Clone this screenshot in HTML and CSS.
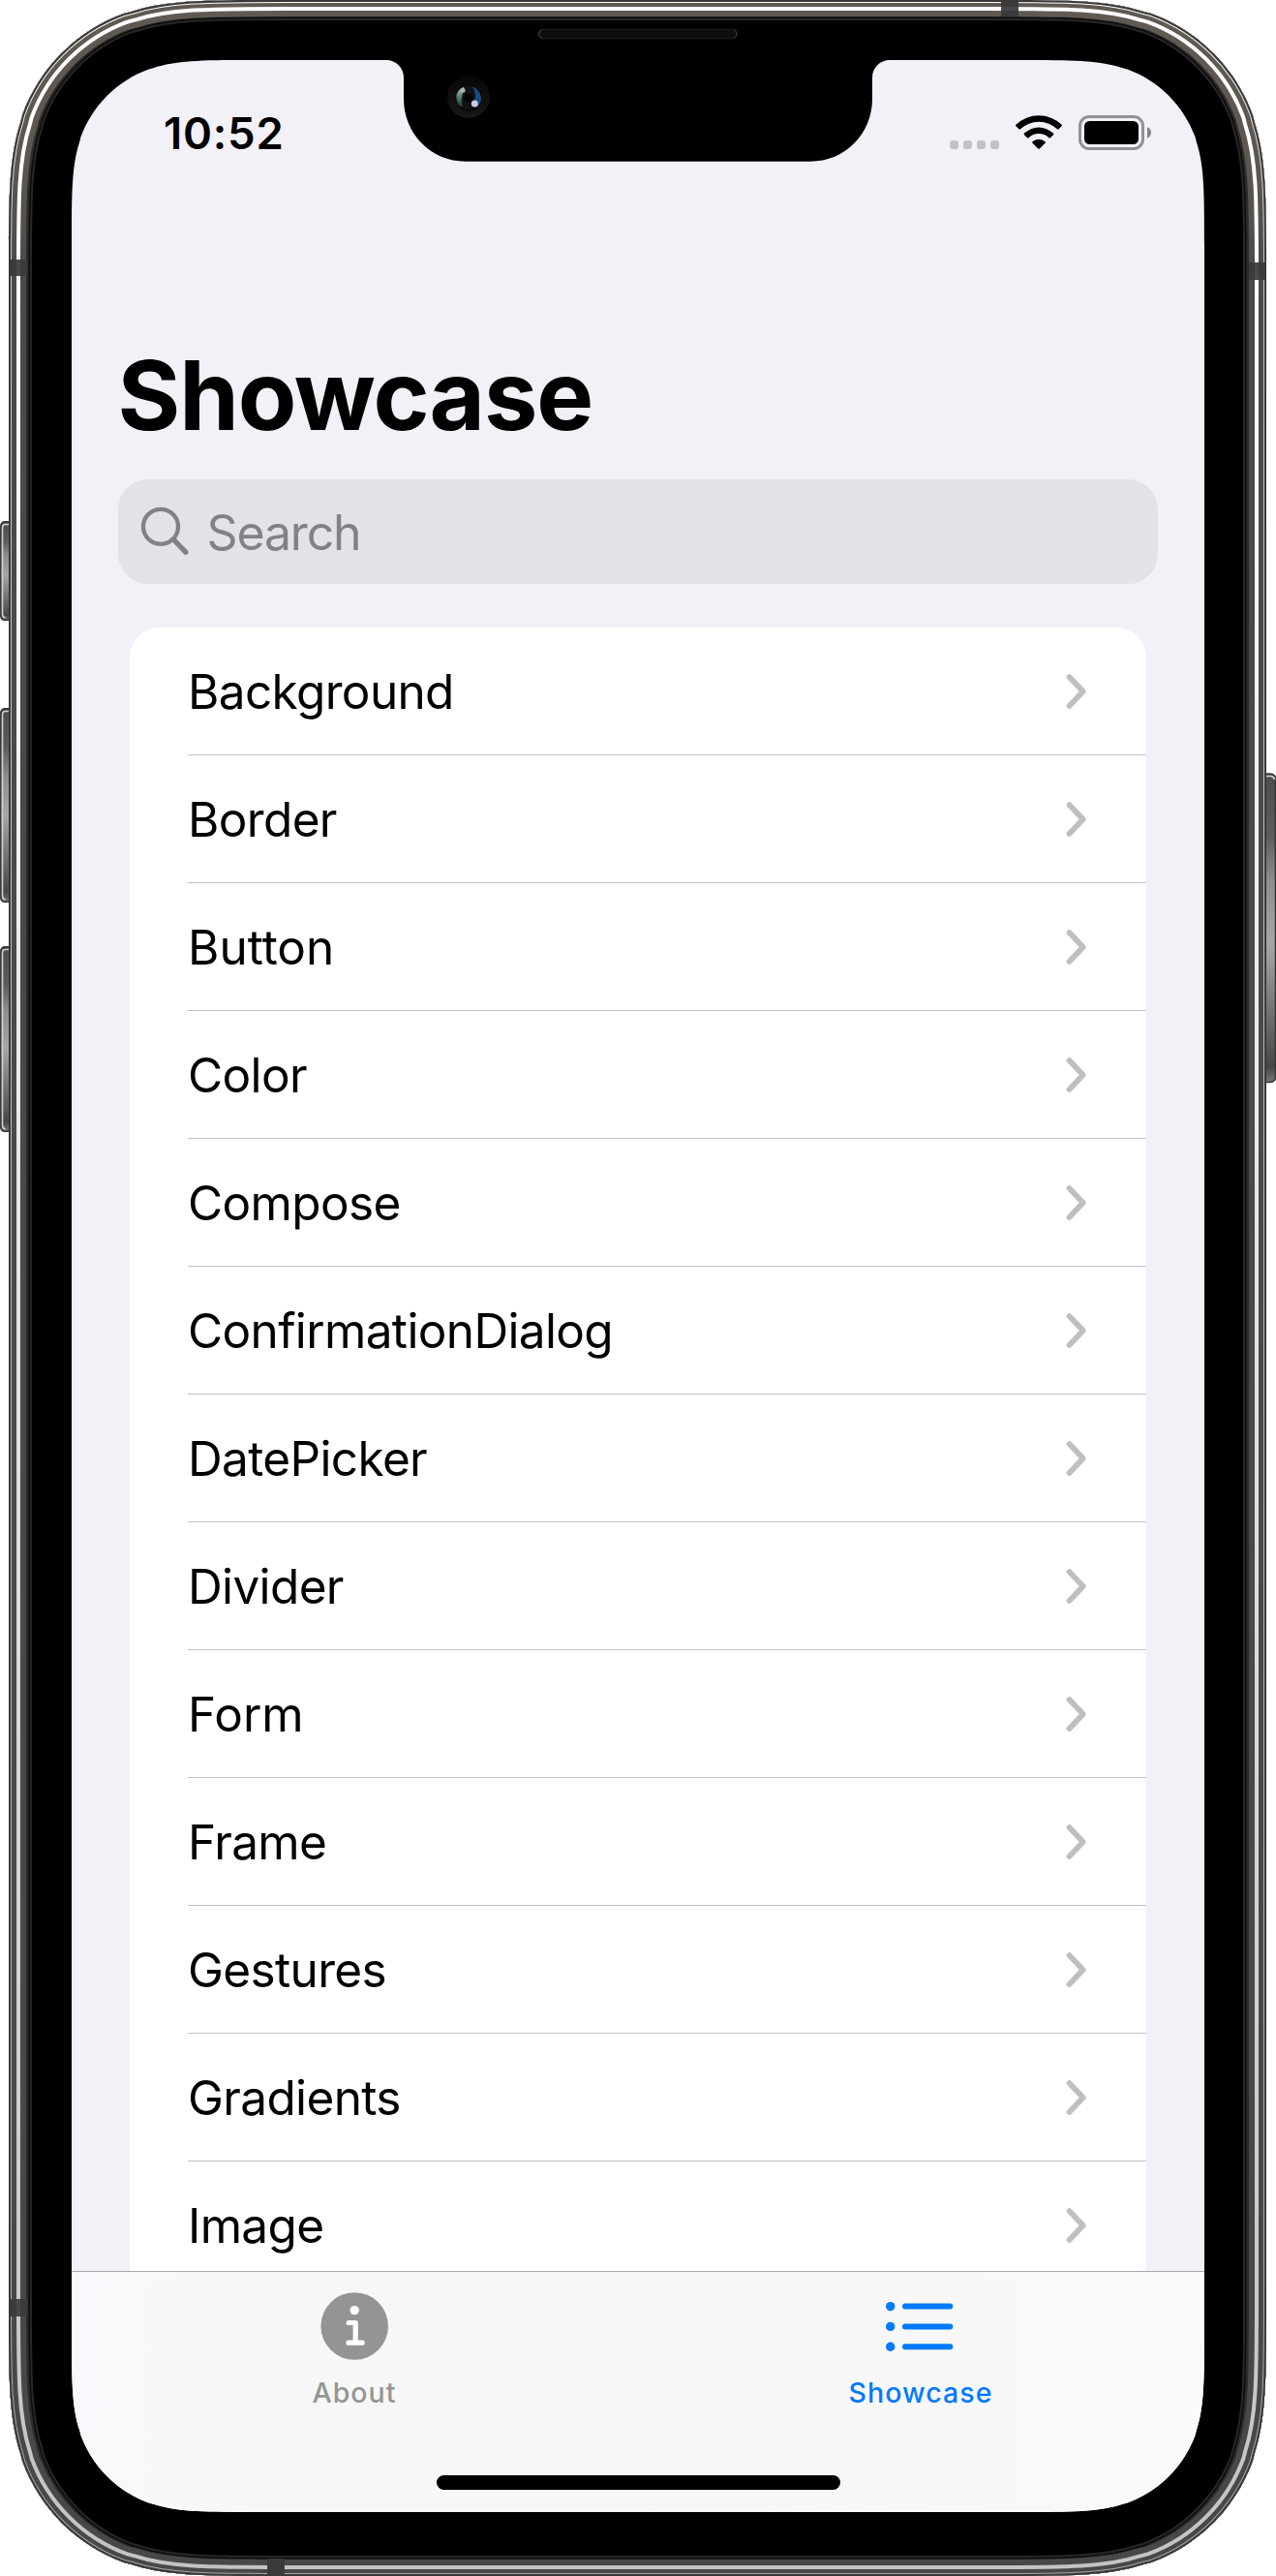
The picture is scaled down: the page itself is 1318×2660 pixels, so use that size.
FILE: index.html
```html
<!DOCTYPE html>
<html lang="en">
<head>
<meta charset="utf-8">
<title>Showcase</title>
<link rel="stylesheet" href="styles.css">
</head>
<body>
<div class="phone">
  <svg class="frame" width="1318" height="2660" viewBox="0 0 1318 2660" aria-hidden="true">
    <defs>
      <path id="body" d="M0,287.4c0,-82.8 0,-124.1 12.3,-161.5l1.8,-7.2c17.7,-48.6 56,-86.9 104.6,-104.6l7.2,-1.8c37.4,-12.3 78.7,-12.3 161.5,-12.3H1011.6c82.8,0 124.1,0 161.5,12.3l7.2,1.8c48.6,17.7 86.9,56 104.6,104.6l1.8,7.2c12.3,37.4 12.3,78.7 12.3,161.5V2372.6c0,82.8 0,124.1 -12.3,161.5l-1.8,7.2c-17.7,48.6 -56,86.9 -104.6,104.6l-7.2,1.8c-37.4,12.3 -78.7,12.3 -161.5,12.3H287.4c-82.8,0 -124.1,0 -161.5,-12.3l-7.2,-1.8c-48.6,-17.7 -86.9,-56 -104.6,-104.6l-1.8,-7.2c-12.3,-37.4 -12.3,-78.7 -12.3,-161.5z"/>
      <clipPath id="bodyClip"><use href="#body"/></clipPath>
      <linearGradient id="steel" gradientUnits="userSpaceOnUse" x1="0" y1="0" x2="0" y2="2660">
        <stop offset="0" stop-color="#605a53"/><stop offset=".06" stop-color="#5d5751"/><stop offset=".11" stop-color="#4a4a4a"/><stop offset="1" stop-color="#484848"/>
      </linearGradient>
      <linearGradient id="shine" gradientUnits="userSpaceOnUse" x1="0" y1="0" x2="0" y2="2660">
        <stop offset="0" stop-color="#fff"/><stop offset=".1" stop-color="#fdfdfd"/><stop offset=".45" stop-color="#e8e8e8"/><stop offset="1" stop-color="#c3c3c3"/>
      </linearGradient>
      <linearGradient id="rim" gradientUnits="userSpaceOnUse" x1="0" y1="0" x2="0" y2="2660">
        <stop offset="0" stop-color="#fff"/><stop offset=".1" stop-color="#c9c9c9"/><stop offset="1" stop-color="#a8a8a8"/>
      </linearGradient>
      <linearGradient id="key" x1="0" y1="0" x2="0" y2="1">
        <stop offset="0" stop-color="#4c4c4c"/><stop offset=".2" stop-color="#5c5c5c"/><stop offset=".35" stop-color="#8e8e8e"/><stop offset=".55" stop-color="#a6a6a6"/><stop offset=".75" stop-color="#777"/><stop offset=".95" stop-color="#464646"/><stop offset="1" stop-color="#777"/>
      </linearGradient>
      <linearGradient id="lensGreen" x1="0" y1="0" x2="0" y2="1"><stop offset="0" stop-color="#cfe0d8"/><stop offset=".5" stop-color="#5d9078"/><stop offset="1" stop-color="#20362c"/></linearGradient>
      <linearGradient id="lensRing" x1="0" y1="0" x2="0" y2="1"><stop offset="0" stop-color="#060606"/><stop offset="1" stop-color="#181818"/></linearGradient>
    </defs>

    <!-- side keys -->
    <g stroke="#333" stroke-width="1.5">
      <rect x=".8" y="538.800" width="16" height="101.500" rx="4" fill="url(#key)"/>
      <rect x=".8" y="731.800" width="16" height="199.500" rx="4" fill="url(#key)"/>
      <rect x=".8" y="977.800" width="16" height="190.500" rx="4" fill="url(#key)"/>
      <rect x="1300" y="799" width="17.500" height="318.500" rx="5" fill="url(#key)"/>
    </g>
    <g fill="none" stroke="#cfcfcf" stroke-width="1.600">
      <path d="M9,541.500H5.500Q2.500,541.500 2.500,545V634Q2.500,637 5.500,638"/>
      <path d="M9,734.500H5.500Q2.500,734.500 2.500,738V925Q2.500,928 5.500,929"/>
      <path d="M9,980.500H5.500Q2.500,980.500 2.500,984V1162Q2.500,1165 5.500,1166"/>
      <path d="M1308,801.500H1313Q1316,802 1316.500,805"/>
    </g>

    <!-- metal band: concentric inset strokes, widest first -->
    <g transform="translate(9,0)" clip-path="url(#bodyClip)">
      <use href="#body" fill="#000"/>
      <g fill="none" transform="translate(3,0) scale(.99538,1)">
        <use href="#body" stroke="#272727" stroke-width="42"/>
        <use href="#body" stroke="#0d0d0d" stroke-width="38"/>
        <use href="#body" stroke="#2c2b29" stroke-width="35"/>
      </g>
      <g fill="none" transform="translate(1,0) scale(.99846,1)">
        <use href="#body" stroke="url(#steel)" stroke-width="34"/>
        <use href="#body" stroke="url(#shine)" stroke-width="22"/>
        <use href="#body" stroke="url(#steel)" stroke-width="14"/>
      </g>
      <g fill="none">
        <use href="#body" stroke="url(#rim)" stroke-width="6"/>
        <use href="#body" stroke="#393939" stroke-width="4"/>
      </g>
    </g>

    <!-- antenna bands -->
    <g fill="#3b3b3b">
      <rect x="11" y="268" width="17" height="17"/>
      <rect x="11" y="2374" width="17" height="18"/>
      <rect x="1290" y="271" width="16" height="18"/>
      <rect x="1034" y="2" width="18" height="15"/>
      <rect x="276" y="2642" width="18" height="16"/>
    </g>
    <g fill="#484848">
      <rect x="17" y="268" width="4" height="17"/><rect x="17" y="2374" width="4" height="18"/>
      <rect x="1296" y="271" width="4" height="18"/><rect x="1034" y="7" width="18" height="4"/>
    </g>
  </svg>

  <main class="screen">
    <header class="status">
      <span class="time">10:52</span>
      <svg class="indicators" width="210" height="38" viewBox="0 0 210 38" aria-hidden="true">
        <g fill="#c3c2c7"><rect x="1" y="28" width="9" height="9" rx="3"/><rect x="15" y="28" width="9" height="9" rx="3"/><rect x="29" y="28" width="9" height="9" rx="3"/><rect x="43" y="28" width="9" height="9" rx="3"/></g>
        <g>
          <path d="M69.400,11.800A34,34 0 0 1 116.600,11.800Q117.400,12.500 116.600,13.300L113.600,16.300Q112.800,17 112,16.300A27.600,27.600 0 0 0 74,16.300Q73.200,17 72.400,16.300L69.400,13.300Q68.600,12.500 69.400,11.800Z"/>
          <path d="M78,20.600A21.700,21.700 0 0 1 108,20.600Q108.800,21.400 108,22.200L105,25.200Q104.200,25.900 103.400,25.200A15.200,15.200 0 0 0 82.600,25.200Q81.800,25.900 81,25.200L78,22.200Q77.200,21.400 78,20.600Z"/>
          <path d="M86.500,29.200A9.500,9.500 0 0 1 99.500,29.200Q100.200,30 99.500,30.700L93.800,36.400Q93,37.200 92.200,36.400L86.500,30.700Q85.800,30 86.500,29.200Z"/>
        </g>
        <rect x="135.500" y="3.500" width="65" height="33" rx="9.500" fill="none" stroke="#929196" stroke-width="3"/>
        <rect x="140" y="8" width="56" height="24" rx="5.500"/>
        <path d="M205,14.200Q209,16 209,20Q209,24 205,25.800Z" fill="#858489"/>
      </svg>
    </header>

    <h1 class="title">Showcase</h1>

    <label class="search">
      <svg width="52" height="54" viewBox="0 0 52 54" fill="none" stroke="#828187" aria-hidden="true">
        <circle cx="22" cy="22.800" r="18" stroke-width="4.300"/>
        <path d="M35.200,36L47.800,49.200" stroke-width="5.400" stroke-linecap="round"/>
      </svg>
      <span class="hint">Search</span>
    </label>

    <div class="scroll">
      <ul class="list">
        <li class="row"><span>Background</span><svg class="chev" viewBox="0 0 24 40"><path d="M4.500,5L18.700,20L4.500,35"/></svg></li>
        <li class="row"><span>Border</span><svg class="chev" viewBox="0 0 24 40"><path d="M4.500,5L18.700,20L4.500,35"/></svg></li>
        <li class="row loose"><span>Button</span><svg class="chev" viewBox="0 0 24 40"><path d="M4.500,5L18.700,20L4.500,35"/></svg></li>
        <li class="row"><span>Color</span><svg class="chev" viewBox="0 0 24 40"><path d="M4.500,5L18.700,20L4.500,35"/></svg></li>
        <li class="row"><span>Compose</span><svg class="chev" viewBox="0 0 24 40"><path d="M4.500,5L18.700,20L4.500,35"/></svg></li>
        <li class="row"><span>ConfirmationDialog</span><svg class="chev" viewBox="0 0 24 40"><path d="M4.500,5L18.700,20L4.500,35"/></svg></li>
        <li class="row"><span>DatePicker</span><svg class="chev" viewBox="0 0 24 40"><path d="M4.500,5L18.700,20L4.500,35"/></svg></li>
        <li class="row"><span>Divider</span><svg class="chev" viewBox="0 0 24 40"><path d="M4.500,5L18.700,20L4.500,35"/></svg></li>
        <li class="row loose"><span>Form</span><svg class="chev" viewBox="0 0 24 40"><path d="M4.500,5L18.700,20L4.500,35"/></svg></li>
        <li class="row"><span>Frame</span><svg class="chev" viewBox="0 0 24 40"><path d="M4.500,5L18.700,20L4.500,35"/></svg></li>
        <li class="row"><span>Gestures</span><svg class="chev" viewBox="0 0 24 40"><path d="M4.500,5L18.700,20L4.500,35"/></svg></li>
        <li class="row"><span>Gradients</span><svg class="chev" viewBox="0 0 24 40"><path d="M4.500,5L18.700,20L4.500,35"/></svg></li>
        <li class="row"><span>Image</span><svg class="chev" viewBox="0 0 24 40"><path d="M4.500,5L18.700,20L4.500,35"/></svg></li>
      </ul>
    </div>

    <nav class="tabs">
      <div class="tab">
        <svg width="72" height="72" viewBox="0 0 72 72" aria-hidden="true">
          <circle cx="35.200" cy="36" r="34.800" fill="#949593"/>
          <circle cx="35.200" cy="19.600" r="4.700" fill="#fff"/>
          <path d="M29.200,32.500H36.200V53M29,53.200H43.200" fill="none" stroke="#fff" stroke-width="5.200" stroke-linecap="round" stroke-linejoin="round"/>
        </svg>
        <span class="label about">About</span>
      </div>
      <div class="tab active">
        <svg width="72" height="72" viewBox="0 0 72 72" aria-hidden="true">
          <g fill="#007aff"><circle cx="4.700" cy="15.600" r="4.700"/><circle cx="4.700" cy="36.400" r="4.700"/><circle cx="4.700" cy="57.200" r="4.700"/></g>
          <path d="M20,15.600H66.300M20,36.400H66.300M20,57.200H66.300" stroke="#007aff" stroke-width="6" stroke-linecap="round"/>
        </svg>
        <span class="label">Showcase</span>
      </div>
      <div class="home"></div>
    </nav>
  </main>

  <svg class="notch" width="1318" height="180" viewBox="0 0 1318 180" aria-hidden="true">
    <path d="M399,62C409,62 417,70 417,80V102C417,138 445,166.700 481,166.700H837C873,166.700 901,138 901,102V80C901,70 909,62 919,62V60H399Z"/>
    <rect x="556.200" y="30.200" width="205" height="9.600" rx="4.800" fill="#0d0d0d" stroke="#1f1f1f"/>
    <path d="M559.500,31Q556.500,32 556.500,35T559.500,39M758,31Q761,32 761,35T758,39" fill="none" stroke="#444"/>
    <circle cx="484" cy="100" r="22" fill="url(#lensRing)"/>
    <circle cx="484" cy="101" r="13.500" fill="#030303"/>
    <circle cx="484" cy="101" r="12.500" fill="#111014"/>
    <path d="M478,90C473,93 471,97 471.500,101C471.500,106 474,110 478,111C476.500,105 476.500,96 480,91Z" fill="url(#lensGreen)" opacity=".85"/>
    <path d="M488,89.500C495,92 497,98 497,102C496.500,107 494,110 491,111L488,107C491,104 493,97 488,89.500Z" fill="#174a86"/>
    <circle cx="484" cy="101" r="4.500" fill="#020202"/>
    <circle cx="478.300" cy="93.500" r="2.300" fill="#a5b8af"/>
    <circle cx="490.300" cy="107" r="3.500" fill="#ccc8e0"/>
  </svg>
</div>
</body>
</html>
```
FILE: styles.css
```css
* { box-sizing: border-box; }

body {
  margin: 0;
  background: #fff;
  color: #000;
  font-family: Inter, "Liberation Sans", sans-serif;
}

.phone {
  position: relative;
  width: 1318px;
  height: 2660px;
  padding: 62px 74px 66px;
  overflow: hidden;
}

.frame,
.notch {
  position: absolute;
  top: 0;
  left: 0;
}

.screen {
  position: relative;
  display: flex;
  flex-direction: column;
  width: 1170px;
  height: 2532px;
  background: #f2f1f7;
  clip-path: path("M0,192.600c0,-55.400 0,-83.200 8.200,-108.200l1.200,-4.800c11.900,-32.600 37.600,-58.300 70.200,-70.200l4.800,-1.200c25,-8.200 52.800,-8.200 108.200,-8.200H977.400c55.400,0 83.200,0 108.200,8.200l4.800,1.200c32.600,11.900 58.300,37.600 70.200,70.200l1.200,4.800c8.200,25 8.200,52.800 8.200,108.200V2339.400c0,55.400 0,83.200 -8.200,108.200l-1.200,4.800c-11.900,32.600 -37.600,58.300 -70.200,70.200l-4.800,1.200c-25,8.200 -52.800,8.200 -108.200,8.200H192.600c-55.400,0 -83.200,0 -108.200,-8.200l-4.800,-1.200c-32.600,-11.900 -58.300,-37.600 -70.200,-70.200l-1.200,-4.800c-8.200,-25 -8.200,-52.800 -8.200,-108.200z");
}

.status {
  display: flex;
  justify-content: space-between;
  align-items: flex-start;
  height: 286px;
  padding: 55px 54px 0 95px;
}

.time {
  margin-top: -7px;
  font-size: 45.5px;
  font-weight: 600;
  line-height: 56px;
  letter-spacing: 0.75px;
}

.title {
  margin: 0 0 27px 47.5px;
  font-size: 99px;
  font-weight: 700;
  line-height: 120px;
  letter-spacing: -1.15px;
}

.search {
  display: flex;
  align-items: flex-start;
  flex: none;
  height: 108px;
  margin: 0 48px 45px;
  padding: 26px 22px 0;
  border-radius: 31px;
  background: #e3e2e8;
}

.search svg { flex: none; }

.hint {
  margin-left: 17.5px;
  font-size: 50px;
  line-height: 58px;
  letter-spacing: -1.15px;
  color: #828187;
}

.scroll {
  flex: 1;
  min-height: 0;
  overflow: hidden;
  padding: 0 60px;
}

.list {
  margin: 0;
  padding: 0 0 0 60px;
  list-style: none;
  background: #fff;
  border-radius: 31px 31px 0 0;
}

.row {
  display: flex;
  align-items: center;
  justify-content: space-between;
  height: 132px;
  padding: 1px 60px 0 0;
  border-bottom: 1px solid #c2c2c4;
  font-size: 49.5px;
  letter-spacing: -0.64px;
}

.loose { letter-spacing: 0; }

.chev {
  width: 24px;
  height: 40px;
  fill: none;
  stroke: #bfbfbf;
  stroke-width: 5.8px;
  stroke-linecap: round;
  stroke-linejoin: round;
}

.tabs {
  position: relative;
  display: flex;
  flex: none;
  height: 249px;
  border-top: 1px solid #aaaaac;
  background: linear-gradient(90deg, #f8f9fc, #f6f7f7 20%, #f7f7f7 50%, #f8f8f8 80%, #f9fafa);
}

.tab {
  display: flex;
  flex: 1;
  flex-direction: column;
  align-items: center;
  padding-top: 20px;
}

.active svg { margin-right: 1px; }

.label {
  margin: 14px 1px 0 0;
  font-size: 28.5px;
  font-weight: 500;
  line-height: 38px;
  letter-spacing: 1.05px;
  color: #007aff;
}

.about { color: #949593; }

.home {
  position: absolute;
  bottom: 23px;
  left: 377px;
  width: 417px;
  height: 15px;
  border-radius: 8px;
  background: #000;
}
```
